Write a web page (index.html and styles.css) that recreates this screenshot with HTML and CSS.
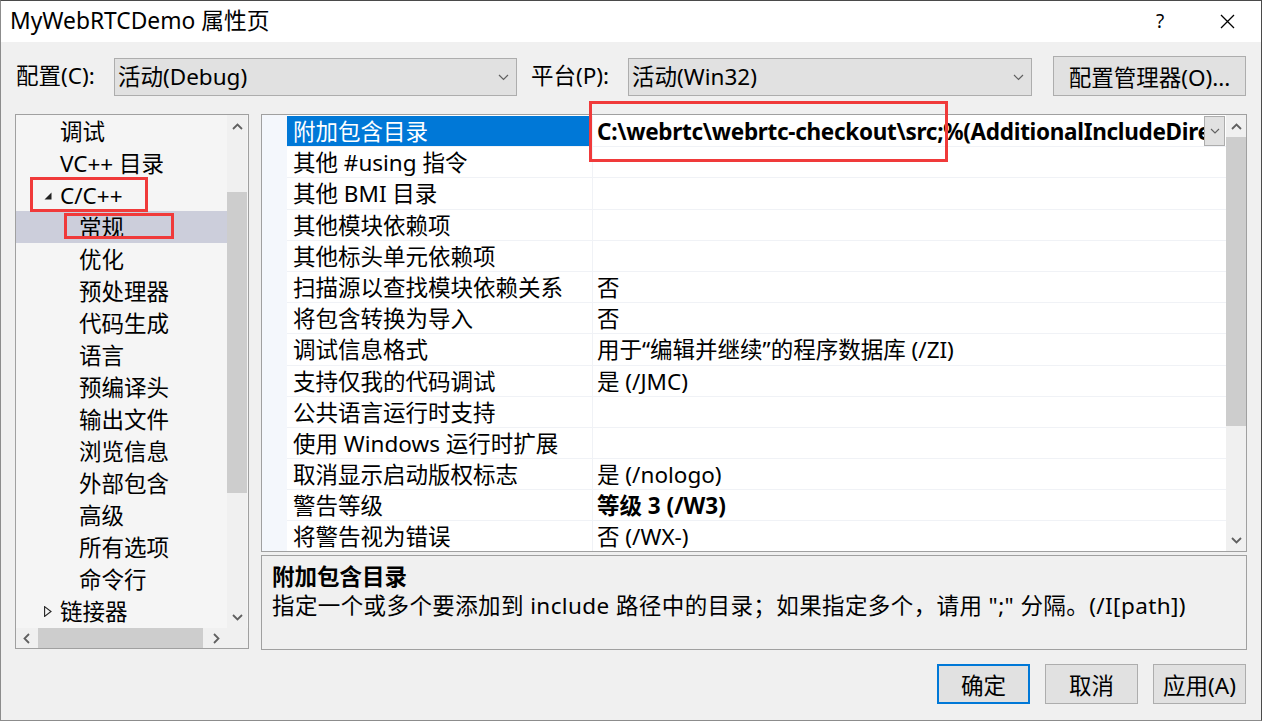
FILE: index.html
```html
<!DOCTYPE html>
<html lang="zh-CN">
<head>
<meta charset="utf-8">
<title>MyWebRTCDemo 属性页</title>
<link rel="stylesheet" href="styles.css">
</head>
<body>
<div class="window">
  <div class="titlebar">
    <span class="title">MyWebRTCDemo 属性页</span>
    <span class="tb-help">?</span>
    <span class="tb-close"><svg width="15" height="15" viewBox="0 0 15 15"><path d="M1 1 L14 14 M14 1 L1 14" stroke="#000" stroke-width="1.3" fill="none"/></svg></span>
  </div>

  <div class="configbar">
    <span class="cfg-label">配置(C):</span>
    <div class="combo combo-cfg"><span class="combo-text">活动(Debug)</span><svg class="chev" width="11" height="7" viewBox="0 0 11 7"><polyline points="1,1 5.5,5.5 10,1" fill="none" stroke="#606060" stroke-width="1.2"/></svg></div>
    <span class="cfg-label cfg-plat">平台(P):</span>
    <div class="combo combo-plat"><span class="combo-text">活动(Win32)</span><svg class="chev" width="11" height="7" viewBox="0 0 11 7"><polyline points="1,1 5.5,5.5 10,1" fill="none" stroke="#606060" stroke-width="1.2"/></svg></div>
    <button class="btn btn-mgr">配置管理器(O)...</button>
  </div>

  <div class="main">
    <div class="tree">
      <div class="tree-body">
        <div class="tree-list">
          <div class="trow top"><span class="twist"></span>调试</div>
          <div class="trow top"><span class="twist"></span>VC++ 目录</div>
          <div class="trow top"><span class="twist"><svg width="8" height="8" viewBox="0 0 8 8"><polygon points="7.5,0.5 7.5,7.5 0.5,7.5" fill="#222"/></svg></span>C/C++</div>
          <div class="trow child sel">常规</div>
          <div class="trow child">优化</div>
          <div class="trow child">预处理器</div>
          <div class="trow child">代码生成</div>
          <div class="trow child">语言</div>
          <div class="trow child">预编译头</div>
          <div class="trow child">输出文件</div>
          <div class="trow child">浏览信息</div>
          <div class="trow child">外部包含</div>
          <div class="trow child">高级</div>
          <div class="trow child">所有选项</div>
          <div class="trow child">命令行</div>
          <div class="trow top"><span class="twist"><svg width="8" height="11" viewBox="0 0 8 11"><polygon points="0.6,0.6 7,5.5 0.6,10.4" fill="none" stroke="#222" stroke-width="1.1"/></svg></span>链接器</div>
        </div>
        <div class="vscroll tree-vs">
          <div class="sb-arrow"><svg width="11" height="7" viewBox="0 0 11 7"><polyline points="1,6 5.5,1.5 10,6" fill="none" stroke="#606060" stroke-width="1.8"/></svg></div>
          <div class="tree-vs-gap"></div>
          <div class="thumb tree-vs-thumb"></div>
          <div class="sb-fill"></div>
          <div class="sb-arrow"><svg width="11" height="7" viewBox="0 0 11 7"><polyline points="1,1 5.5,5.5 10,1" fill="none" stroke="#606060" stroke-width="1.8"/></svg></div>
        </div>
      </div>
      <div class="tree-hrow">
        <div class="hscroll">
          <div class="sb-harrow"><svg width="7" height="11" viewBox="0 0 7 11"><polyline points="6,1 1.5,5.5 6,10" fill="none" stroke="#606060" stroke-width="1.8"/></svg></div>
          <div class="hthumb"></div>
          <div class="sb-fill"></div>
          <div class="sb-harrow"><svg width="7" height="11" viewBox="0 0 7 11"><polyline points="1,1 5.5,5.5 1,10" fill="none" stroke="#606060" stroke-width="1.8"/></svg></div>
        </div>
        <div class="corner"></div>
      </div>
    </div>

    <div class="right">
      <div class="grid">
        <div class="grid-margin"></div>
        <div class="grid-rows">
          <div class="prow"><div class="pname psel">附加包含目录</div><div class="pval"><span class="vtext bold tight">C:\webrtc\webrtc-checkout\src;%(AdditionalIncludeDirectories)</span><span class="vbtn"><svg width="10" height="6" viewBox="0 0 10 6"><polyline points="1,1 5,5 9,1" fill="none" stroke="#606060" stroke-width="1.1"/></svg></span></div></div>
          <div class="prow"><div class="pname">其他 #using 指令</div><div class="pval"><span class="vtext"></span></div></div>
          <div class="prow"><div class="pname">其他 BMI 目录</div><div class="pval"><span class="vtext"></span></div></div>
          <div class="prow"><div class="pname">其他模块依赖项</div><div class="pval"><span class="vtext"></span></div></div>
          <div class="prow"><div class="pname">其他标头单元依赖项</div><div class="pval"><span class="vtext"></span></div></div>
          <div class="prow"><div class="pname">扫描源以查找模块依赖关系</div><div class="pval"><span class="vtext">否</span></div></div>
          <div class="prow"><div class="pname">将包含转换为导入</div><div class="pval"><span class="vtext">否</span></div></div>
          <div class="prow"><div class="pname">调试信息格式</div><div class="pval"><span class="vtext">用于“编辑并继续”的程序数据库 (/ZI)</span></div></div>
          <div class="prow"><div class="pname">支持仅我的代码调试</div><div class="pval"><span class="vtext">是 (/JMC)</span></div></div>
          <div class="prow"><div class="pname">公共语言运行时支持</div><div class="pval"><span class="vtext"></span></div></div>
          <div class="prow"><div class="pname">使用 Windows 运行时扩展</div><div class="pval"><span class="vtext"></span></div></div>
          <div class="prow"><div class="pname">取消显示启动版权标志</div><div class="pval"><span class="vtext">是 (/nologo)</span></div></div>
          <div class="prow"><div class="pname">警告等级</div><div class="pval"><span class="vtext bold">等级 3 (/W3)</span></div></div>
          <div class="prow"><div class="pname">将警告视为错误</div><div class="pval"><span class="vtext">否 (/WX-)</span></div></div>
        </div>
        <div class="vscroll grid-vs">
          <div class="sb-arrow grid-up"><svg width="11" height="7" viewBox="0 0 11 7"><polyline points="1,6 5.5,1.5 10,6" fill="none" stroke="#606060" stroke-width="1.8"/></svg></div>
          <div class="thumb grid-vs-thumb"></div>
          <div class="sb-fill"></div>
          <div class="sb-arrow"><svg width="11" height="7" viewBox="0 0 11 7"><polyline points="1,1 5.5,5.5 10,1" fill="none" stroke="#606060" stroke-width="1.8"/></svg></div>
        </div>
      </div>
      <div class="desc">
        <div class="desc-title">附加包含目录</div>
        <div class="desc-text">指定一个或多个要添加到 include 路径中的目录；如果指定多个，请用 ";" 分隔。(/I[path])</div>
      </div>
    </div>
  </div>

  <div class="footer">
    <button class="btn btn-foot btn-default">确定</button>
    <button class="btn btn-foot">取消</button>
    <button class="btn btn-foot">应用(A)</button>
  </div>

  <div class="anno anno-value"></div>
  <div class="anno anno-cc"></div>
  <div class="anno anno-gen"></div>
  <div class="frame"></div>
</div>
</body>
</html>
```

FILE: styles.css
```css
* { box-sizing: border-box; }
html, body { margin: 0; padding: 0; background: #f0f0f0; }

.window {
  position: relative;
  width: 1262px;
  height: 721px;
  overflow: hidden;
  background: #f0f0f0;
  font-family: "Noto Sans", "Noto Sans CJK SC", sans-serif;
  font-size: 22.5px;
  color: #000;
}

/* title bar */
.titlebar {
  height: 42px;
  background: #fff;
  display: flex;
  align-items: center;
  padding-left: 10px;
  padding-right: 15px;
}
.title { font-size: 22.8px; line-height: 42px; }
.tb-help {
  margin-left: auto;
  width: 40px;
  text-align: center;
  font-size: 19px;
  line-height: 42px;
}
.tb-close {
  margin-left: 27px;
  width: 40px;
  height: 42px;
  display: flex;
  align-items: center;
  justify-content: center;
}

/* config bar */
.configbar {
  height: 72px;
  padding-top: 14px;
  padding-left: 16px;
  display: flex;
  align-items: flex-start;
}
.cfg-label {
  width: 98px;
  height: 40px;
  line-height: 40px;
}
.cfg-plat { margin-left: 14px; width: 97px; }
.combo {
  height: 38px;
  margin-top: 2px;
  border: 1px solid #adadad;
  background: #e1e1e1;
  display: flex;
  align-items: center;
  padding-left: 3px;
  padding-right: 7px;
}
.combo-cfg { width: 403px; }
.combo-plat { width: 404px; }
.combo-text { flex: 1; line-height: 36px; }
.chev { flex: none; }

.btn {
  font-family: inherit;
  font-size: 22.5px;
  color: #000;
  background: #e1e1e1;
  border: 1px solid #adadad;
  padding: 0;
  margin: 0;
  height: 40px;
}
.btn-mgr { margin-left: 21px; width: 193px; }

/* main */
.main {
  height: 536px;
  padding-left: 15px;
  display: flex;
}
.tree {
  width: 234px;
  height: 535px;
  border: 1px solid #a0a0a0;
  background: #f5f5f5;
  display: flex;
  flex-direction: column;
}
.tree-body { flex: 1; display: flex; min-height: 0; }
.tree-list { width: 211px; overflow: hidden; }
.trow {
  height: 32px;
  line-height: 32px;
  white-space: nowrap;
  display: flex;
  align-items: center;
  padding-top: 1px;
}
.trow.top { padding-left: 28px; }
.trow.child { padding-left: 63px; }
.trow.sel { background: #cccedb; }
.twist {
  width: 16px;
  height: 31px;
  display: flex;
  align-items: center;
}

.vscroll {
  width: 20px;
  background: #f0f0f0;
  display: flex;
  flex-direction: column;
}
.sb-arrow {
  height: 22px;
  display: flex;
  align-items: center;
  justify-content: center;
  flex: none;
}
.sb-fill { flex: 1; }
.thumb { background: #cdcdcd; flex: none; }
.tree-vs-gap { height: 55px; flex: none; }
.tree-vs-thumb { height: 301px; }

.tree-hrow { height: 20px; display: flex; }
.hscroll {
  width: 211px;
  display: flex;
  background: #f0f0f0;
}
.sb-harrow {
  width: 21px;
  display: flex;
  align-items: center;
  justify-content: center;
}
.hthumb {
  width: 165px;
  margin-left: 1px;
  background: #cdcdcd;
}
.corner { flex: 1; background: #f0f0f0; }

.right {
  margin-left: 12px;
  width: 986px;
  display: flex;
  flex-direction: column;
  gap: 3px;
}

/* property grid */
.grid {
  height: 438px;
  border: 1px solid #a0a0a0;
  background: #fff;
  display: flex;
}
.grid-margin { width: 25px; background: #f4f7fc; }
.grid-rows {
  flex: 1;
  padding-top: 1px;
  overflow: hidden;
}
.prow {
  height: 31.2px;
  display: flex;
  border-bottom: 1px solid #f0f2f6;
}
.pname {
  width: 306px;
  padding-left: 6px;
  border-right: 1px solid #f0f2f6;
  line-height: 31px;
  white-space: nowrap;
  overflow: hidden;
}
.pname.psel { background: #0078d7; color: #fff; }
.pval {
  flex: 1;
  display: flex;
  min-width: 0;
}
.vtext {
  flex: 1;
  padding-left: 4px;
  line-height: 31px;
  white-space: nowrap;
  overflow: hidden;
}
.bold { font-weight: 700; }
.tight { letter-spacing: -0.3px; }
.vbtn {
  flex: none;
  width: 21px;
  height: 30px;
  margin-right: 1px;
  background: #e1e1e1;
  border: 1px solid #adadad;
  display: flex;
  align-items: center;
  justify-content: center;
}
.grid-up { height: 22px; }
.grid-vs-thumb { height: 289px; }

/* description */
.desc {
  height: 95px;
  border: 1px solid #a0a0a0;
  background: #f0f0f0;
  padding: 6px 10px 0 10px;
}
.desc-title { font-weight: 700; line-height: 29px; }
.desc-text { line-height: 29px; white-space: nowrap; letter-spacing: 0.4px; }

/* footer */
.footer {
  padding-top: 14px;
  padding-right: 16px;
  display: flex;
  justify-content: flex-end;
  gap: 15px;
}
.btn-foot { width: 93px; }
.btn-default { border: 2px solid #0078d7; }

/* annotations drawn over the screenshot */
.anno {
  position: absolute;
  border: 3px solid #f03a3a;
}
.anno-value { left: 589px; top: 101px; width: 359px; height: 61px; }
.anno-cc { left: 30px; top: 177px; width: 118px; height: 35px; }
.anno-gen { left: 64px; top: 213px; width: 110px; height: 26px; }

.frame {
  position: absolute;
  inset: 0;
  border: 1px solid #8c8c8c;
  border-top-color: #4a4a4a;
  border-right-color: #4a4a4a;
  pointer-events: none;
}
```
